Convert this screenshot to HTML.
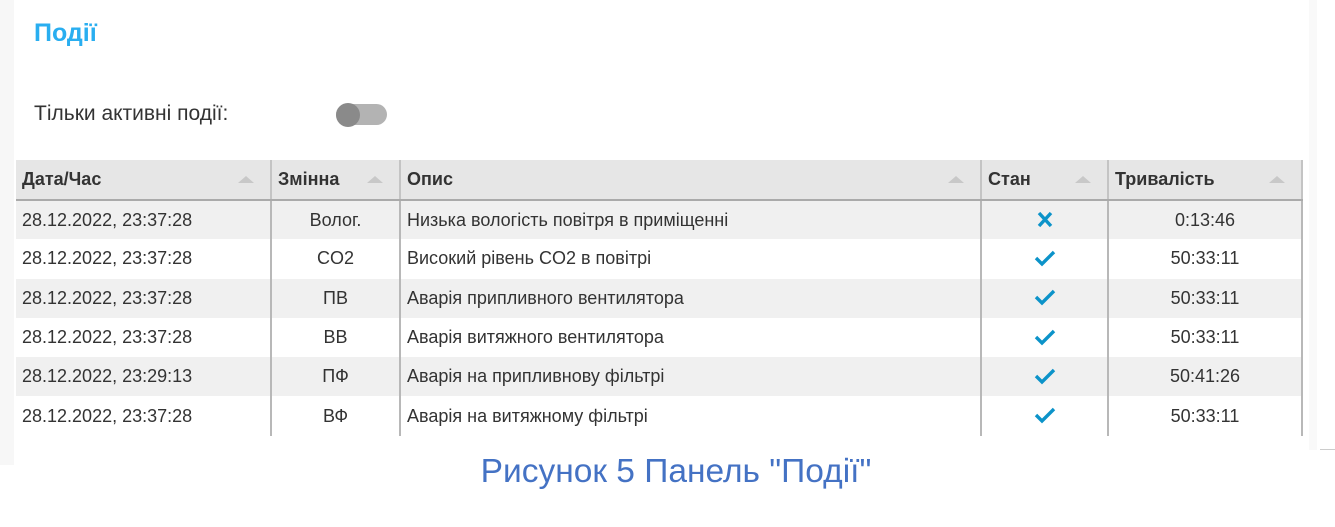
<!DOCTYPE html>
<html><head><meta charset="utf-8"><style>
*{margin:0;padding:0;box-sizing:border-box}
body{width:1335px;height:527px;background:#fff;position:relative;overflow:hidden;font-family:"Liberation Sans","DejaVu Sans",sans-serif;color:#333}
.ls{position:absolute;left:0;top:0;width:14px;height:465px;background:#f7f7f7}
.rs{position:absolute;left:1309px;top:0;width:8px;height:450px;background:#f9f9f9}
.rl{position:absolute;left:1320px;top:449px;width:15px;height:1px;background:#ccc}
h1{position:absolute;left:34px;top:19px;font-size:25px;font-weight:bold;color:#29aef0}
.lbl{position:absolute;left:34px;top:102px;font-size:21px;color:#333}
.tg{position:absolute;left:336px;top:104px;width:51px;height:21px;border-radius:11px;background:#b3b3b3}
.tg i{position:absolute;left:0;top:-1px;width:24px;height:24px;border-radius:50%;background:#8a8a8a}
table{position:absolute;left:16px;top:160px;border-collapse:collapse;font-size:18px;table-layout:fixed;width:1286px}
th{height:40px;background:#e6e6e6;text-align:left;font-weight:bold;padding:0 6px;border-right:2px solid #c4c4c4;border-bottom:2px solid #aaa;position:relative;color:#333}
th:after{content:"";position:absolute;right:16px;top:16px;border-left:8px solid transparent;border-right:8px solid transparent;border-bottom:7px solid #c8c8c8}
td{height:39.3px;padding:0 6px;border-right:2px solid #b8b8b8}
tr:nth-child(even) td{background:#f0f0f0}
.c{text-align:center}
td svg{display:block;margin:0 auto}
.cap{position:absolute;left:0;width:1352px;text-align:center;top:453px;font-size:33.5px;color:#4472c4}
</style></head><body>
<div class="ls"></div><div class="rs"></div><div class="rl"></div>
<h1>Події</h1>
<div class="lbl">Тільки активні події:</div>
<div class="tg"><i></i></div>
<table>
<colgroup><col style="width:255px"><col style="width:129px"><col style="width:581px"><col style="width:127px"><col style="width:194px"></colgroup>
<tr><th>Дата/Час</th><th>Змінна</th><th>Опис</th><th>Стан</th><th>Тривалість</th></tr>
<tr><td>28.12.2022, 23:37:28</td><td class="c">Волог.</td><td>Низька вологість повітря в приміщенні</td><td><svg width="20" height="20" viewBox="0 0 20 20"><path d="M4 3L16 16M16 3L4 16" stroke="#0c93c9" stroke-width="3.4"/></svg></td><td class="c">0:13:46</td></tr>
<tr><td>28.12.2022, 23:37:28</td><td class="c">CO2</td><td>Високий рівень CO2 в повітрі</td><td><svg width="22" height="20" viewBox="0 0 22 20"><path d="M2 9L8 15L20 3" fill="none" stroke="#0c93c9" stroke-width="3.4"/></svg></td><td class="c">50:33:11</td></tr>
<tr><td>28.12.2022, 23:37:28</td><td class="c">ПВ</td><td>Аварія припливного вентилятора</td><td><svg width="22" height="20" viewBox="0 0 22 20"><path d="M2 9L8 15L20 3" fill="none" stroke="#0c93c9" stroke-width="3.4"/></svg></td><td class="c">50:33:11</td></tr>
<tr><td>28.12.2022, 23:37:28</td><td class="c">ВВ</td><td>Аварія витяжного вентилятора</td><td><svg width="22" height="20" viewBox="0 0 22 20"><path d="M2 9L8 15L20 3" fill="none" stroke="#0c93c9" stroke-width="3.4"/></svg></td><td class="c">50:33:11</td></tr>
<tr><td>28.12.2022, 23:29:13</td><td class="c">ПФ</td><td>Аварія на припливнову фільтрі</td><td><svg width="22" height="20" viewBox="0 0 22 20"><path d="M2 9L8 15L20 3" fill="none" stroke="#0c93c9" stroke-width="3.4"/></svg></td><td class="c">50:41:26</td></tr>
<tr><td>28.12.2022, 23:37:28</td><td class="c">ВФ</td><td>Аварія на витяжному фільтрі</td><td><svg width="22" height="20" viewBox="0 0 22 20"><path d="M2 9L8 15L20 3" fill="none" stroke="#0c93c9" stroke-width="3.4"/></svg></td><td class="c">50:33:11</td></tr>
</table>
<div class="cap">Рисунок 5 Панель "Події"</div>
</body></html>
